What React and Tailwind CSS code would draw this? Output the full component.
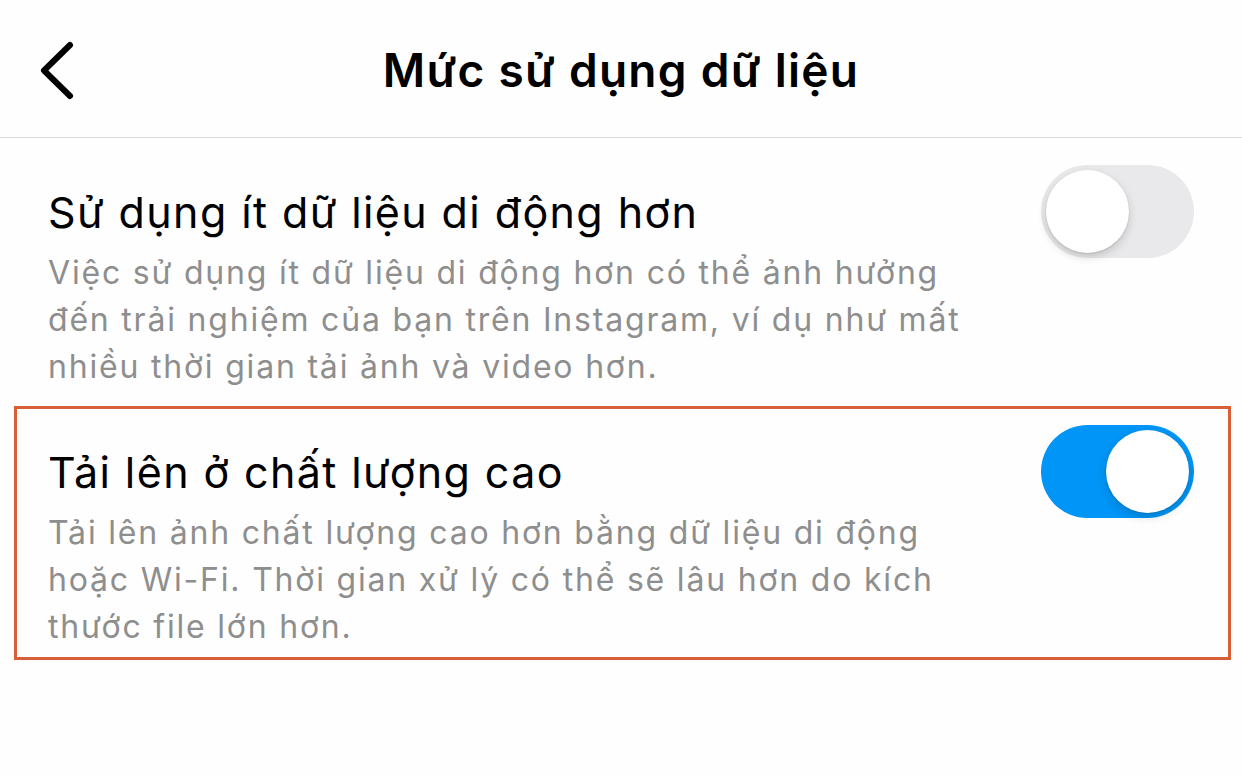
import { useState } from "react";

function Toggle({ on, onChange }) {
  return (
    <button
      type="button"
      onClick={onChange}
      className={`relative shrink-0 w-[153px] h-[93px] rounded-full transition-colors ${
        on ? "bg-[#0095f6]" : "bg-[#e9e9eb]"
      }`}
    >
      <span
        className={`absolute top-[5px] w-[83px] h-[83px] rounded-full bg-white shadow-[0_4px_10px_rgba(0,0,0,0.16),0_1px_2px_rgba(0,0,0,0.1)] transition-all ${
          on ? "left-[65px]" : "left-[5px]"
        }`}
      />
    </button>
  );
}

function SettingRow({ title, description, on, onChange, highlighted }) {
  return (
    <div
      className={`ml-[14px] mr-[11px] pl-[31px] pr-[34px] flex justify-between border-[3px] ${
        highlighted ? "border-[#d95f36]" : "border-transparent"
      }`}
    >
      <div className="pt-[38px] pb-[7px]">
        <h2 className="text-[43px] leading-[50px] tracking-[1.4px] text-black">{title}</h2>
        <p className="mt-[12px] max-w-[945px] text-[32px] leading-[47px] tracking-[1.8px] text-[#8e8e8e]">
          {description}
        </p>
      </div>
      <div className="pt-[16px]">
        <Toggle on={on} onChange={onChange} />
      </div>
    </div>
  );
}

export default function App() {
  const [lessData, setLessData] = useState(false);
  const [highQuality, setHighQuality] = useState(true);

  return (
    <div className="w-[1242px] h-[776px] bg-[#fefefe] font-['Inter',sans-serif] overflow-hidden">
      {/* Thanh tiêu đề */}
      <header className="relative h-[138px] flex items-center justify-center border-b border-[#dbdbdb]">
        <button type="button" className="absolute left-[38px] top-[40px]">
          <svg width="40" height="62" viewBox="0 0 40 62" fill="none">
            <path
              d="M32 5 L6 30.5 L32 56"
              stroke="#000"
              strokeWidth="6"
              strokeLinecap="round"
              strokeLinejoin="round"
            />
          </svg>
        </button>
        <h1 className="mt-[4px] text-[46px] font-semibold tracking-[1.3px] text-black">
          Mức sử dụng dữ liệu
        </h1>
      </header>

      <div className="pt-[8px] flex flex-col gap-[6px]">
        <SettingRow
          title="Sử dụng ít dữ liệu di động hơn"
          description="Việc sử dụng ít dữ liệu di động hơn có thể ảnh hưởng đến trải nghiệm của bạn trên Instagram, ví dụ như mất nhiều thời gian tải ảnh và video hơn."
          on={lessData}
          onChange={() => setLessData(!lessData)}
        />
        <SettingRow
          highlighted
          title="Tải lên ở chất lượng cao"
          description="Tải lên ảnh chất lượng cao hơn bằng dữ liệu di động hoặc Wi-Fi. Thời gian xử lý có thể sẽ lâu hơn do kích thước file lớn hơn."
          on={highQuality}
          onChange={() => setHighQuality(!highQuality)}
        />
      </div>
    </div>
  );
}
